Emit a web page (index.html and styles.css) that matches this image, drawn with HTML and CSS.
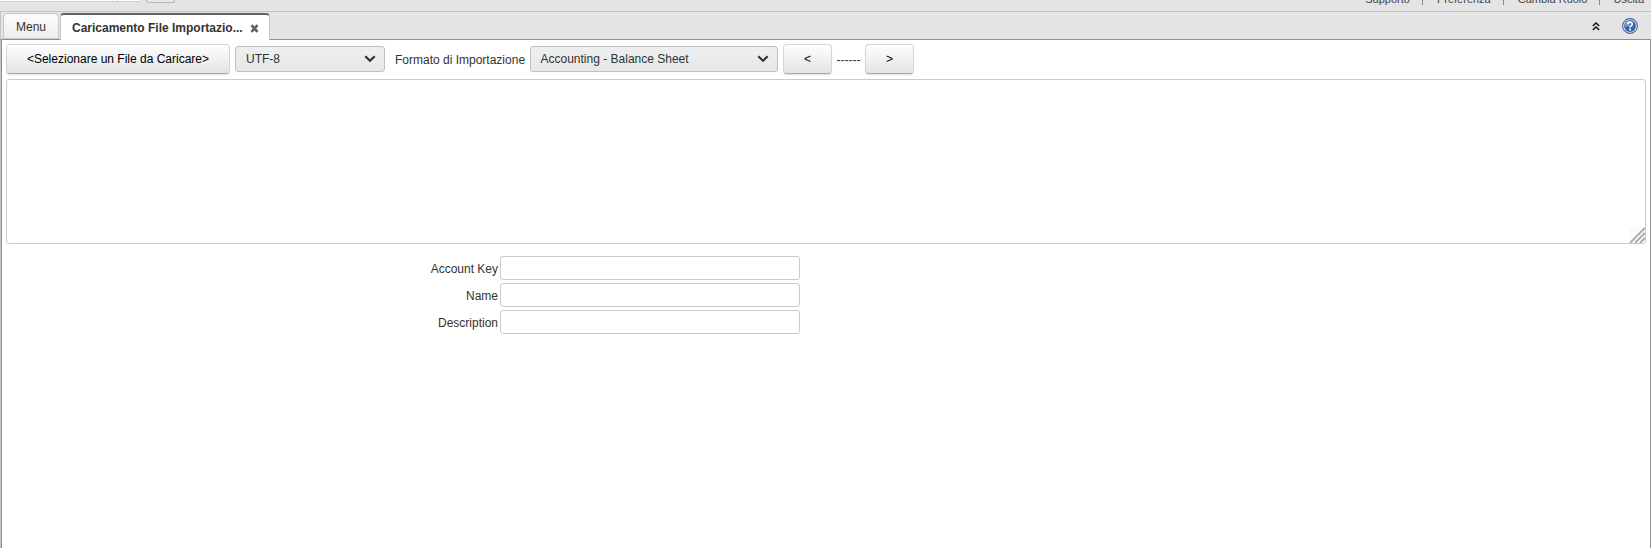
FILE: index.html
```html
<!DOCTYPE html>
<html lang="it">
<head>
<meta charset="utf-8">
<title>Caricamento File Importazione</title>
<link rel="stylesheet" href="styles.css">
</head>
<body>
<header class="topbar">
  <div class="search"><span class="search-text"></span><span class="search-trigger"></span><span class="search-button"></span></div>
  <nav class="links"><a>Supporto</a><i></i><a>Preferenza</a><i></i><a>Cambia Ruolo</a><i></i><a>Uscita</a></nav>
</header>
<div class="tabs">
  <div class="tab">Menu</div>
  <div class="tab active"><span>Caricamento File Importazio...</span>
    <svg class="close" width="9" height="9" viewBox="0 0 9 9"><path d="M1.5 1.2 7.5 7.8M7.5 1.2 1.5 7.8" stroke="#636363" stroke-width="2.7"/></svg>
  </div>
  <div class="tools">
    <svg width="8" height="9" viewBox="0 0 8 9"><path d="M.8 4 4 1 7.2 4M.8 8 4 5 7.2 8" fill="none" stroke="#111" stroke-width="1.4"/></svg>
    <svg width="16" height="16" viewBox="0 0 16 16"><circle cx="8" cy="8" r="7.4" fill="#e8eef7" stroke="#3d67a5" stroke-width="1.1"/><circle cx="8" cy="8" r="5.9" fill="#3764a8"/><path d="M3 5.5A5.7 5.7 0 0 1 8 2.2V8L3 9Z" fill="#7195c7"/><path d="M5.7 6.2C5.7 3.5 10.3 3.5 10.3 6.2 10.3 7.9 8 7.9 8 9.6" fill="none" stroke="#fff" stroke-width="1.8"/><rect x="7.1" y="10.6" width="1.8" height="1.8" fill="#fff"/></svg>
  </div>
</div>
<main class="panel">
  <div class="toolbar">
    <button class="btn file">&lt;Selezionare un File da Caricare&gt;</button>
    <div class="select charset"><span>UTF-8</span><svg width="12" height="8" viewBox="0 0 12 8"><path d="M1.3 1.3 6 5.8 10.7 1.3" fill="none" stroke="#2e3436" stroke-width="2.2"/></svg></div>
    <span class="format-label">Formato di Importazione</span>
    <div class="select format"><span>Accounting - Balance Sheet</span><svg width="12" height="8" viewBox="0 0 12 8"><path d="M1.3 1.3 6 5.8 10.7 1.3" fill="none" stroke="#2e3436" stroke-width="2.2"/></svg></div>
    <button class="btn step">&lt;</button>
    <span class="record">------</span>
    <button class="btn step">&gt;</button>
  </div>
  <div class="preview"><svg width="16" height="16" viewBox="0 0 16 16"><rect width="16" height="16" fill="#fafafa"/><path d="M1 16 16 1M6 16 16 6M11 16 16 11" stroke="#a9a9a9" stroke-width="1.8"/></svg></div>
  <div class="fields">
    <label>Account Key</label><input type="text">
    <label>Name</label><input type="text">
    <label>Description</label><input type="text">
  </div>
</main>
</body>
</html>
```
FILE: styles.css
```css
* { box-sizing: border-box; }
body {
  margin: 0;
  height: 548px;
  overflow: hidden;
  display: flex;
  flex-direction: column;
  background: #e4e4e4;
  color: #333;
  font: 12px/14px "Liberation Sans", Arial, sans-serif;
}
.topbar {
  height: 12px;
  flex: none;
  display: flex;
  justify-content: space-between;
  border-bottom: 1px solid #c4c4c4;
}
.search { display: flex; align-items: flex-start; }
.search-text, .search-trigger { height: 2px; background: #fff; border-bottom: 1px solid #cfcfcf; }
.search-text { width: 118px; border-right: 1px solid #cfcfcf; }
.search-trigger { width: 22px; }
.search-button {
  width: 29px;
  height: 3px;
  margin-left: 6px;
  background: #e9e9e9;
  border: 1px solid #b8b8b8;
  border-top: 0;
  border-radius: 0 0 4px 4px;
}
.links { display: flex; padding-right: 7px; font-size: 11px; }
.links a { margin: -8px -1px 0 1px; color: #444; }
.links a:last-child { margin: -8px 0 0; }
.links i { width: 1px; height: 5px; margin: 0 13px; background: #888; }
.tabs {
  height: 28px;
  flex: none;
  display: flex;
  padding: 1px 0 0 3px;
  border-bottom: 1px solid #8f8f8f;
  border-left: 1px solid #c4c4c4;
}
.tab {
  width: 56px;
  height: 26px;
  margin-left: -1px;
  padding-top: 6px;
  text-align: center;
  border: 1px solid #c8c8c8;
  border-radius: 4px 4px 0 0;
  background: linear-gradient(#fcfcfc, #ededed);
}
.tab.active {
  width: 210px;
  height: 27px;
  margin: 0 0 -1px 1px;
  padding: 6px 10px 0 11px;
  display: flex;
  justify-content: space-between;
  font-weight: bold;
  border-top: 2px solid #636363;
  border-bottom: 0;
  background: #fff;
}
.close { margin-top: 3px; }
.tools { margin-left: auto; padding-right: 13px; display: flex; align-items: center; gap: 22px; }
.panel {
  flex: 1;
  margin-left: 1px;
  padding: 4px 4px 0;
  background: #fff;
  border-left: 1px solid #8f8f8f;
  border-right: 1px solid #8f8f8f;
  box-shadow: -1px 0 #c4c4c4;
}
.toolbar { height: 35px; display: flex; align-items: flex-start; }
.btn {
  height: 30px;
  padding: 0 0 1px;
  font: inherit;
  color: #000;
  border: 1px solid #d6d6d6;
  border-bottom-color: #ababab;
  border-radius: 4px;
  background: linear-gradient(#fefefe, #e4e4e4);
  box-shadow: 0 1px 1px rgba(0, 0, 0, .12);
}
.file { width: 224px; }
.step { width: 49px; }
.select {
  height: 26px;
  margin-top: 2px;
  padding: 0 8px 0 10px;
  display: flex;
  align-items: center;
  justify-content: space-between;
  color: #2e3436;
  border: 1px solid #bebfc1;
  border-radius: 3px;
  background: linear-gradient(#efefef, #e6e7e9);
}
.charset { width: 150px; margin-left: 5px; }
.format { width: 248px; margin-right: 5px; padding-left: 9.5px; }
.format-label { width: 135px; margin: 9px 0 0 10px; white-space: nowrap; }
.record { width: 33px; margin-top: 9px; text-align: center; }
.preview {
  height: 165px;
  display: flex;
  align-items: flex-end;
  justify-content: flex-end;
  border: 1px solid #cacaca;
  border-radius: 3px;
}
.fields {
  margin-top: 12px;
  display: grid;
  grid-template-columns: 492px 300px;
  column-gap: 2px;
  row-gap: 3px;
}
.fields label { text-align: right; padding-top: 6px; }
.fields input {
  width: 300px;
  height: 24px;
  border: 1px solid #cacaca;
  border-radius: 3px;
  background: #fff;
}
```
